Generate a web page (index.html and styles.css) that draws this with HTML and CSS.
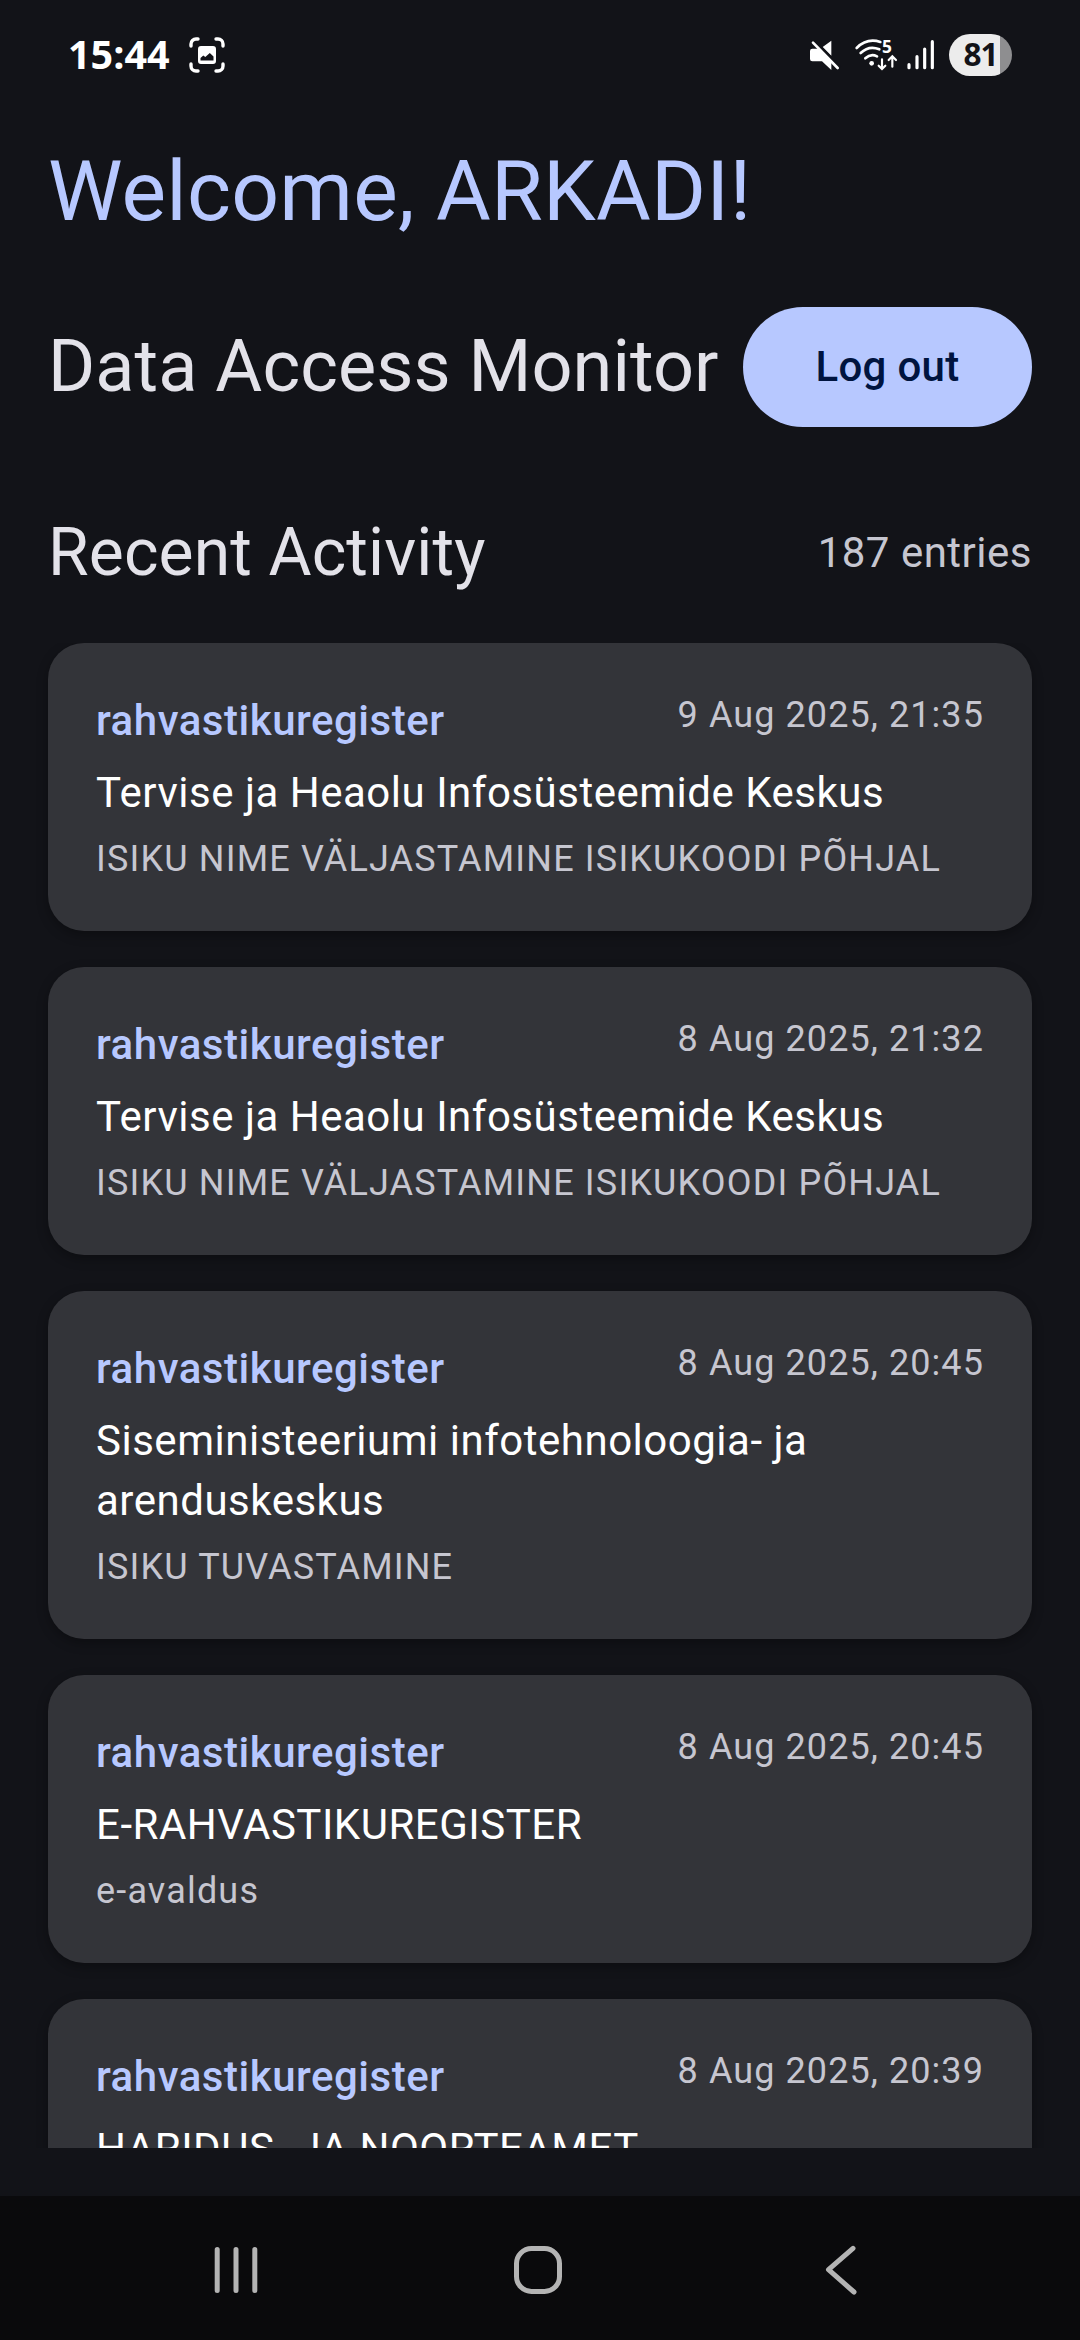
FILE: index.html
```html
<!DOCTYPE html>
<html lang="et">
<head>
<meta charset="utf-8">
<title>Data Access Monitor</title>
<link rel="stylesheet" href="styles.css">
</head>
<body>
<div class="screen">
  <header class="status">
    <span class="clock">15:44</span>
    <svg class="capture" width="36" height="36" viewBox="0 0 36 36">
      <path class="line" d="M2 9V7a5 5 0 0 1 5-5h2M27 2h2a5 5 0 0 1 5 5v2M34 27v2a5 5 0 0 1-5 5h-2M9 34H7a5 5 0 0 1-5-5v-2"/>
      <path class="solid" fill-rule="evenodd" d="M12 9h12q3 0 3 3v12q0 3-3 3H12q-3 0-3-3V12q0-3 3-3zM11.500 23.500h13v-4l-3.700-3.500-4.500 4-2-1.500-2.800 2.500z"/>
    </svg>
    <span class="grow"></span>
    <svg class="mute" width="30" height="31" viewBox="0 0 90 93">
      <path class="solid" d="M7 26h20L64 63v27L36 64H7q-7 0-7-7V33q0-7 7-7zM38 21L64 2v45z"/>
      <path d="M9 8L83 84" stroke="#fff" stroke-width="8" stroke-linecap="round"/>
      <path d="M15 2L92 81" stroke="#121318" stroke-width="5"/>
    </svg>
    <svg class="wifi" width="43" height="33" viewBox="0 0 129 99">
      <g fill="none" stroke="#fff" stroke-width="8" stroke-linecap="round">
        <path d="M5 27Q36-4 76 9M17 42Q42 18 73 31M31 58Q47 43 66 52"/>
        <path stroke-width="6.500" d="M81 61v28M71 80l10 10 10-10M112 83V53M101 63l11-11 11 11"/>
      </g>
      <circle class="solid" cx="50" cy="73" r="7"/>
      <text x="81" y="43" class="band">5</text>
    </svg>
    <svg class="signal" width="27" height="30" viewBox="0 0 81 90">
      <path d="M6 74v9M30 50v33M53 27v56M76 5v78" stroke="#fff" stroke-width="9.500" stroke-linecap="round"/>
    </svg>
    <span class="battery">81</span>
  </header>

  <main class="content">
    <h1 class="welcome">Welcome, ARKADI!</h1>
    <div class="row title-row">
      <h2 class="app-title">Data Access Monitor</h2>
      <button class="logout">Log out</button>
    </div>
    <div class="row activity-row">
      <h3 class="section">Recent Activity</h3>
      <span class="count">187 entries</span>
    </div>
    <div class="list">
      <article class="card">
        <div class="card-head"><span class="register">rahvastikuregister</span><time class="date">9 Aug 2025, 21:35</time></div>
        <p class="org">Tervise ja Heaolu Infosüsteemide Keskus</p>
        <p class="action">ISIKU NIME VÄLJASTAMINE ISIKUKOODI PÕHJAL</p>
      </article>
      <article class="card">
        <div class="card-head"><span class="register">rahvastikuregister</span><time class="date">8 Aug 2025, 21:32</time></div>
        <p class="org">Tervise ja Heaolu Infosüsteemide Keskus</p>
        <p class="action">ISIKU NIME VÄLJASTAMINE ISIKUKOODI PÕHJAL</p>
      </article>
      <article class="card">
        <div class="card-head"><span class="register">rahvastikuregister</span><time class="date">8 Aug 2025, 20:45</time></div>
        <p class="org">Siseministeeriumi infotehnoloogia- ja<br>arenduskeskus</p>
        <p class="action">ISIKU TUVASTAMINE</p>
      </article>
      <article class="card">
        <div class="card-head"><span class="register">rahvastikuregister</span><time class="date">8 Aug 2025, 20:45</time></div>
        <p class="org">E-RAHVASTIKUREGISTER</p>
        <p class="action">e-avaldus</p>
      </article>
      <article class="card">
        <div class="card-head"><span class="register">rahvastikuregister</span><time class="date">8 Aug 2025, 20:39</time></div>
        <p class="org">HARIDUS- JA NOORTEAMET</p>
      </article>
    </div>
  </main>

  <nav class="navbar">
    <svg width="100" height="100" viewBox="0 0 100 100"><path class="nav-line" d="M37.200 29.500v41M56 29.500v41M74.800 29.500v41"/></svg>
    <svg width="100" height="100" viewBox="0 0 100 100"><rect class="nav-line" x="26.500" y="28.500" width="43" height="43" rx="15"/></svg>
    <svg width="100" height="100" viewBox="0 0 100 100"><path class="nav-line" d="M53 28.300L28.500 49.700L54 72"/></svg>
  </nav>
</div>
</body>
</html>
```

FILE: styles.css
```css
* { box-sizing: border-box; margin: 0; padding: 0; }

body {
  background: #121318;
  font-family: Roboto, sans-serif;
  font-weight: 400;
}

.screen {
  display: flex;
  flex-direction: column;
  width: 1080px;
  height: 2340px;
  overflow: hidden;
  background: #121318;
}

/* Status bar */
.status {
  display: flex;
  align-items: center;
  height: 110px;
  padding: 0 68px;
  flex: none;
}
.status svg { overflow: visible; }
.clock {
  color: #fff;
  font: 700 39.5px/40px "Open Sans", sans-serif;
  width: 103px;
  padding-bottom: 3px;
}
.capture { margin-left: 18px; }
.grow { flex: 1; }
.line { fill: none; stroke: #fff; stroke-width: 3.4; stroke-linecap: round; }
.solid { fill: #fff; }
.wifi { margin-left: 15px; }
.band { fill: #fff; font: 700 52px "Open Sans", sans-serif; }
.signal { margin-left: 9px; }
.battery {
  width: 63px;
  height: 42px;
  margin-left: 15px;
  border-radius: 21px;
  background: linear-gradient(90deg, #ececec 51px, #8e8e90 51px);
  color: #121318;
  font: 700 31.5px/40px "Open Sans", sans-serif;
  text-align: center;
  letter-spacing: -1px;
}

/* Page content */
.content {
  display: flex;
  flex-direction: column;
  height: 2086px;
  padding: 28px 48px 48px;
  flex: none;
}
.row { display: flex; justify-content: space-between; align-items: center; flex: none; }
h1, h2, h3 { font-weight: 400; }
.welcome { color: #b7c8ff; font-size: 84px; line-height: 108px; letter-spacing: 0.25px; }
.title-row { margin-top: 61px; }
.app-title { color: #e3e2e9; font-size: 72px; line-height: 96px; letter-spacing: 0.07px; }
.logout {
  width: 289px;
  height: 120px;
  border: 0;
  border-radius: 60px;
  background: #b7c8ff;
  color: #00143f;
  font: 500 42px/60px Roboto, sans-serif;
  letter-spacing: 0.3px;
}
.activity-row { margin-top: 84px; }
.section { color: #e3e2e9; font-size: 66px; line-height: 84px; letter-spacing: 0.12px; }
.count { color: #c6c6d0; font-size: 42px; line-height: 60px; letter-spacing: 0.5px; }

/* The negative side margins leave room for the card shadows in the clipped list */
.list {
  display: flex;
  flex-direction: column;
  gap: 36px;
  flex: 1;
  min-height: 0;
  margin: 48px -48px 0;
  padding: 0 48px;
  overflow: hidden;
}
.card {
  display: flex;
  flex-direction: column;
  gap: 12px;
  flex: none;
  padding: 48px;
  border-radius: 36px;
  background: #333439;
  box-shadow: 0 4px 12px rgba(0, 0, 0, 0.3);
}
.card-head { display: flex; justify-content: space-between; align-items: flex-start; }
.register { color: #b7c8ff; font-size: 42px; font-weight: 500; line-height: 60px; letter-spacing: 0.52px; }
.date, .action { color: #c6c6d0; font-size: 36px; line-height: 48px; letter-spacing: 1.17px; }
.date { letter-spacing: 1.08px; }
.org { color: #fff; font-size: 42px; line-height: 60px; letter-spacing: 0.51px; }

/* System navigation */
.navbar {
  display: flex;
  align-items: center;
  height: 144px;
  padding: 4px 180px 0;
  background: #0a0a0c;
  flex: none;
  justify-content: space-between;
}
.nav-line { fill: none; stroke: #b4b4b4; stroke-width: 5; stroke-linecap: round; stroke-linejoin: round; }
```
